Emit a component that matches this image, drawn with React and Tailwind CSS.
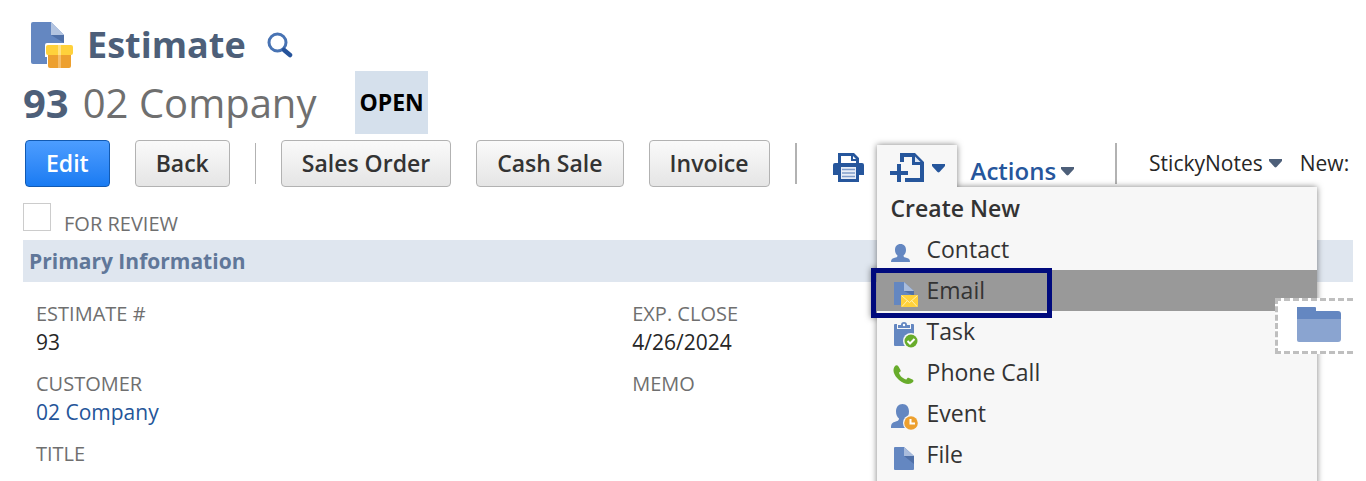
function EstimateIcon() {
  return (
    <svg viewBox="0 0 44 48" className="w-11 h-12 shrink-0" aria-hidden="true">
      <path d="M3 1h18l13 13v29H3a2 2 0 0 1-2-2V3a2 2 0 0 1 2-2z" fill="#6487c1" />
      <path d="M21 1l13 13H21z" fill="#b3c4e0" />
      <path d="M21 14h13v8z" fill="#4f70a8" />
      <path d="M17 22h27v26H17V36h-2V24a2 2 0 0 1 2-2z" fill="#fff" />
      <path d="M18 34h23v11a2 2 0 0 1-2 2H20a2 2 0 0 1-2-2z" fill="#eda02f" />
      <rect x="16" y="24" width="27" height="10" rx="2" fill="#ffd13b" />
      <path d="M28 24h3v10h-3z" fill="#ffe285" />
      <path d="M28 34h3v13h-3z" fill="#f5bd6b" />
    </svg>
  );
}

function SearchIcon() {
  return (
    <svg viewBox="0 0 26 26" className="w-[26px] h-[26px]" aria-hidden="true">
      <circle cx="10.5" cy="10.5" r="8.5" fill="none" stroke="#4873b3" strokeWidth="3" />
      <path d="M17 18l6 5" stroke="#26539b" strokeWidth="4.5" strokeLinecap="round" />
    </svg>
  );
}

function PrintIcon() {
  return (
    <svg viewBox="0 0 31 30" className="w-[31px] h-[30px]" aria-hidden="true">
      <path
        d="M5 0h16l5 5v5h3a2 2 0 0 1 2 2v10h-5v7H5v-7H0V12a2 2 0 0 1 2-2h3z"
        fill="#26569c"
      />
      <path d="M8 3h10v5h5v2H8z" fill="#fff" />
      <path d="M20 3l3 3h-3z" fill="#fff" />
      <rect x="8" y="14" width="15" height="12" fill="#e8eef7" />
      <path d="M9 16.500h13M9 20h13M9 23.500h13" stroke="#7f9dca" strokeWidth="1.5" />
    </svg>
  );
}

function CreateNewIcon() {
  return (
    <svg viewBox="0 0 34 30" className="w-[34px] h-[30px]" aria-hidden="true">
      <path d="M7 11h4v7h7v4h-7v7H7v-7H0v-4h7z" fill="#26569c" />
      <path
        d="M10 0h15l9 9v20H15v-4h15V12h-8V4h-8v5h-4z"
        fill="#26569c"
      />
      <path d="M25 3.500l5.500 5.500H25z" fill="#dfe7f3" />
    </svg>
  );
}

function Caret({ className }) {
  return (
    <svg viewBox="0 0 13 9" className={`w-[13px] h-[9px] shrink-0 ${className || ""}`} aria-hidden="true">
      <path d="M0 0h13v2L7.500 8a1.500 1.500 0 0 1-2 0L0 2z" fill="currentColor" />
    </svg>
  );
}

function FolderIcon() {
  return (
    <svg viewBox="0 0 46 36" className="w-[46px] h-9" aria-hidden="true">
      <path d="M1 1h18a1 1 0 0 1 1 1v3h22a3 3 0 0 1 3 3v10H1z" fill="#6487c1" />
      <path d="M1 13h44v20a3 3 0 0 1-3 3H3a2 2 0 0 1-2-2z" fill="#8aa4d0" />
    </svg>
  );
}

const icons = {
  contact: (
    <path
      d="M9.500 7c3.500 0 5.500 2.500 5.500 6 0 2.500-1 4.500-2.500 5.500 0 1.500 1 2 3.500 2.500 2 .5 3 1.500 3 4H0c0-2.500 1-3.500 3-4 2.500-.5 3.500-1 3.500-2.500C5 17.500 4 15.500 4 13c0-3.500 2-6 5.500-6z"
      fill="#6487c1"
    />
  ),
  email: (
    <>
      <path d="M3 4h10l10 9v14H3z" fill="#6487c1" />
      <path d="M13 4l10 9H13z" fill="#a9bcdc" />
      <path d="M13 13h10v5z" fill="#4f70a8" />
      <rect x="10" y="17" width="17" height="12" rx="1" fill="#ffd13b" />
      <path d="M10.500 17.500l8 7 8-7M11 28.500l5.500-6M26 28.500l-5.500-6" fill="none" stroke="#fff0b0" />
    </>
  ),
  task: (
    <>
      <rect x="3" y="5" width="20" height="22" rx="1" fill="#6487c1" />
      <path d="M6 5h14v5H6z" fill="#f7f7f7" />
      <path d="M7 9V6h3a3 3 0 0 1 6 0h3v3z" fill="#6487c1" />
      <circle cx="13" cy="6" r="1.200" fill="#fff" />
      <circle cx="20" cy="22" r="8" fill="#f7f7f7" />
      <circle cx="20" cy="22" r="6.500" fill="#68ac2b" />
      <path d="M16.500 22l2.500 2.500 4.500-4.500" fill="none" stroke="#fff" strokeWidth="2" />
    </>
  ),
  phone: (
    <path
      d="M4 6c1-1 2.500-1 3.500.5l2 3.500c.5 1 0 2-1.500 2.500.5 3 4 6.500 7.500 7 .5-1.500 1.500-2 2.500-1.500l3.500 1.500c1 .5 1.300 1.500.5 2.500-3 3-8.500 2.500-14-2C2.500 15 1 9.500 4 6z"
      fill="#68ac2b"
    />
  ),
  event: (
    <>
      <path
        d="M11.500 3c4 0 6.500 3 6.500 7.500 0 3-1 5.500-3 7 0 2 1.500 2.500 4.500 3.500 2.500.8 3.500 2 3.500 6H0c0-4 1-5.200 3.500-6C6.500 20 8 19.500 8 17.500c-2-1.500-3-4-3-7C5 6 7.500 3 11.500 3z"
        fill="#6487c1"
      />
      <circle cx="20" cy="22" r="8" fill="#f7f7f7" />
      <circle cx="20" cy="22" r="6.800" fill="#eda02f" />
      <path d="M19.500 18v4.500H24" fill="none" stroke="#fff" strokeWidth="2" />
    </>
  ),
  file: (
    <>
      <path d="M4 5h9l10 9v13a1 1 0 0 1-1 1H4a1 1 0 0 1-1-1V6a1 1 0 0 1 1-1z" fill="#6487c1" />
      <path d="M13 5l10 9H13z" fill="#a9bcdc" />
      <path d="M13 14h10v8z" fill="#4f70a8" />
    </>
  ),
};

const menuItems = [
  { label: "Contact", icon: "contact" },
  { label: "Email", icon: "email", active: true },
  { label: "Task", icon: "task" },
  { label: "Phone Call", icon: "phone" },
  { label: "Event", icon: "event" },
  { label: "File", icon: "file" },
];

function ToolbarButton({ children, primary }) {
  return (
    <button
      type="button"
      className={`h-[47px] px-5 shrink-0 rounded border text-[23px] font-semibold whitespace-nowrap bg-linear-to-b cursor-pointer ${
        primary
          ? "border-[#125ab2] from-[#4c9dff] to-[#187bf2] text-white"
          : "border-[#b2b2b2] from-[#fafafa] to-[#e5e5e5] text-[#333333]"
      }`}
    >
      {children}
    </button>
  );
}

function CreateNewMenu() {
  return (
    <div className="relative z-10 ml-[13px] self-end drop-shadow-[0_0_3px_rgba(0,0,0,0.5)]">
      <button
        type="button"
        aria-label="Create New"
        className="flex items-center gap-2 w-20 h-[42px] pl-[13px] pt-1 bg-[#f7f7f7] text-[#26569c] cursor-pointer"
      >
        <CreateNewIcon />
        <Caret />
      </button>
      <div className="absolute left-0 top-full w-[440px] pb-10 bg-[#f7f7f7]">
        <h2 className="px-[14px] text-[23px] leading-[42px] font-semibold text-[#333333]">Create New</h2>
        <ul>
          {menuItems.map((item) => (
            <li key={item.label} className={`relative ${item.active ? "bg-[#999999]" : ""}`}>
              <a href="#" className="flex items-center gap-2 h-[41px] px-[14px] text-[23px] text-[#333333]">
                <svg viewBox="0 0 28 30" className="w-7 h-[30px] mt-1" aria-hidden="true">
                  {icons[item.icon]}
                </svg>
                {item.label}
              </a>
              {item.active && (
                <div className="absolute -left-[6px] -top-[2px] w-[181px] h-[50px] border-[5px] border-[#000a7d] pointer-events-none" />
              )}
            </li>
          ))}
        </ul>
      </div>
    </div>
  );
}

function Toolbar() {
  return (
    <div className="flex items-center mt-[6px] pl-[2px] whitespace-nowrap">
      <div className="flex items-center gap-[25px] shrink-0">
        <ToolbarButton primary>Edit</ToolbarButton>
        <ToolbarButton>Back</ToolbarButton>
        <div className="w-px h-[41px] bg-[#b2b2b2]" />
        <ToolbarButton>Sales Order</ToolbarButton>
        <ToolbarButton>Cash Sale</ToolbarButton>
        <ToolbarButton>Invoice</ToolbarButton>
        <div className="w-[2px] h-[41px] bg-[#b2b2b2]" />
      </div>
      <button type="button" aria-label="Print" className="ml-9 mt-2 shrink-0 cursor-pointer">
        <PrintIcon />
      </button>
      <CreateNewMenu />
      <a href="#" className="flex items-center gap-[5px] ml-[14px] self-end text-2xl font-semibold text-[#26569c]">
        Actions
        <Caret className="text-[#4d5f79]" />
      </a>
      <div className="w-[2px] h-[41px] ml-[41px] shrink-0 bg-[#b2b2b2]" />
      <a href="#" className="flex items-center gap-[6px] ml-8 text-[21px] text-[#262626]">
        StickyNotes
        <Caret className="text-[#4d5f79]" />
      </a>
      <span className="ml-[18px] text-[21px] text-[#262626]">New:</span>
    </div>
  );
}

function Field({ label, children }) {
  return (
    <div className="mb-[14px]">
      <dt className="text-xl leading-7 text-[#6f6f6f]">{label}</dt>
      <dd className="text-[21px] leading-7 text-[#262626]">{children}</dd>
    </div>
  );
}

function App() {
  return (
    <div className="relative min-h-screen mr-[13px] pl-[23px] overflow-hidden bg-white font-['Open_Sans',sans-serif]">
      <header>
        <div className="flex items-center pt-[18px] h-[71px] pl-[7px]">
          <EstimateIcon />
          <h1 className="ml-[13px] text-[36px] leading-[50px] font-bold text-[#4d5f79]">Estimate</h1>
          <button type="button" aria-label="Search" className="ml-[21px] cursor-pointer">
            <SearchIcon />
          </button>
        </div>
        <div className="flex items-center h-[63px] text-[40px]">
          <span className="font-bold text-[#4d5f79]">93</span>
          <span className="ml-[14px] text-[#6f6f6f]">02 Company</span>
          <span className="flex items-center self-stretch ml-[39px] px-1 bg-[#d5e0ec] text-[23px] font-bold text-black">
            OPEN
          </span>
        </div>
      </header>

      <Toolbar />

      {/* Review flag */}
      <label className="flex items-start gap-[13px] h-[53px] pt-4 text-xl leading-5 text-[#6f6f6f]">
        <input type="checkbox" className="appearance-none w-7 h-7 border border-[#cccccc] bg-white" />
        <span className="mt-[11px]">FOR REVIEW</span>
      </label>

      <h2 className="h-[42px] px-[6px] leading-[42px] bg-[#dfe6ef] text-[21px] font-bold text-[#607799]">
        Primary Information
      </h2>
      <div className="grid grid-cols-[13fr_16fr] pt-[18px]">
        <dl className="pl-[13px]">
          <Field label="ESTIMATE #">93</Field>
          <Field label="CUSTOMER">
            <a href="#" className="text-[#255599]">02 Company</a>
          </Field>
          <Field label="TITLE" />
        </dl>
        <dl className="pl-[13px]">
          <Field label="EXP. CLOSE">4/26/2024</Field>
          <Field label="MEMO" />
        </dl>
      </div>

      {/* Drop zone pinned over the page edge */}
      <div className="absolute z-20 right-0 top-[298px] flex w-[78px] h-14 pl-[18px] pt-[5px] border-[3px] border-r-0 border-dashed border-[#bfbfbf] bg-white">
        <FolderIcon />
      </div>
    </div>
  );
}

export default App;
